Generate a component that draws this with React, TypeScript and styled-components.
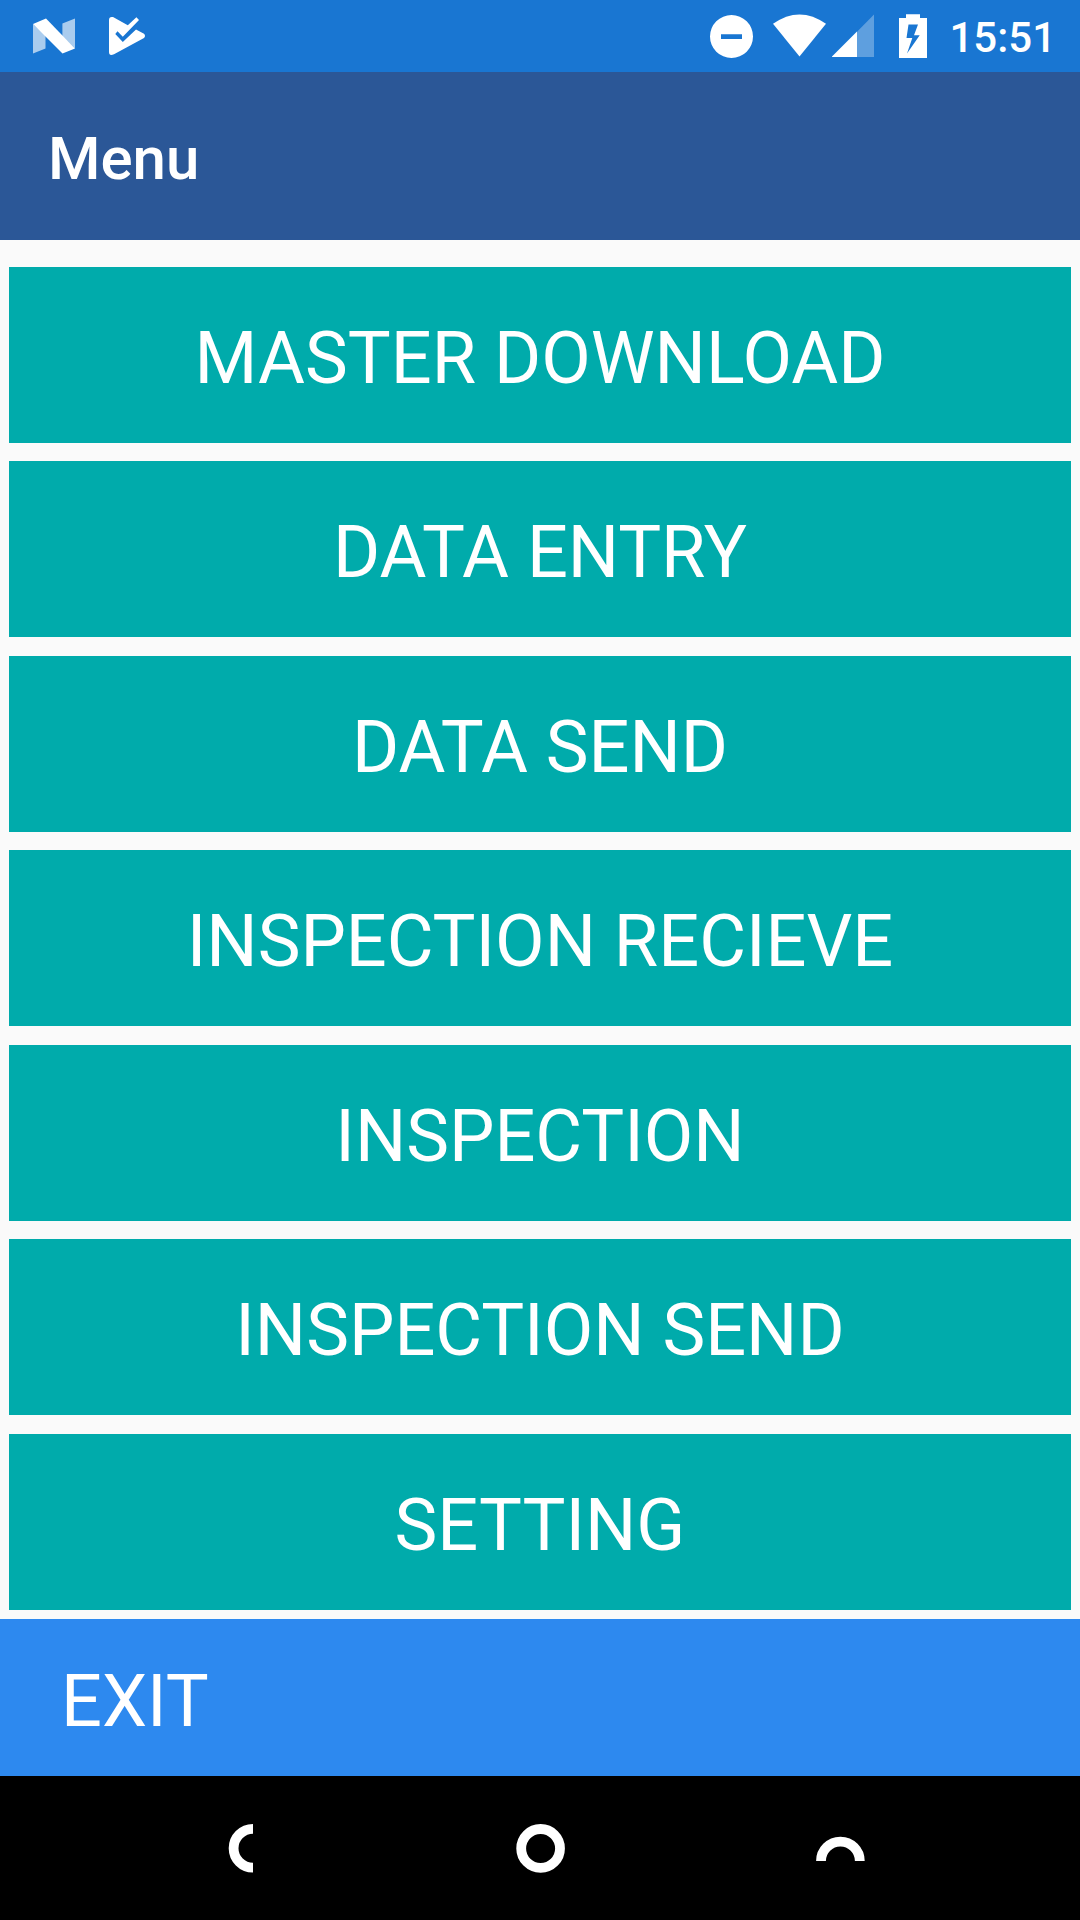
import React from "react";
import styled, { createGlobalStyle } from "styled-components";

const Global = createGlobalStyle`
  * { box-sizing: border-box; }
  body { margin: 0; background: #fafafa; font-family: Roboto, sans-serif; color: #fff; }
`;

const Screen = styled.div`
  width: 1080px;
  height: 1920px;
  display: flex;
  flex-direction: column;
  overflow: hidden;
  background: #fafafa;
`;

const StatusBar = styled.header`
  height: 72px;
  flex: none;
  display: flex;
  justify-content: space-between;
  padding: 0 24px 0 33px;
  background: #1976d2;
`;

const StatusGroup = styled.div`
  display: flex;
  align-items: center;
`;

const StatusIcon = styled.svg<{ $w: number; $gap: number }>`
  display: block;
  flex: none;
  width: ${(p) => p.$w}px;
  height: 72px;
  margin-right: ${(p) => p.$gap}px;
  fill: #fff;
`;

const Clock = styled.span`
  height: 72px;
  padding-top: 3px;
  font-size: 42px;
  font-weight: 500;
  line-height: 69px;
`;

const TitleBar = styled.h1`
  height: 168px;
  flex: none;
  margin: 0;
  padding: 5px 0 0 48px;
  display: flex;
  align-items: center;
  background: #2b5797;
  font-size: 60px;
  font-weight: 500;
`;

const List = styled.main`
  height: 1379px;
  flex: none;
  padding: 27px 9px 9px;
  display: flex;
  flex-direction: column;
`;

const ActionButton = styled.button`
  flex: none;
  border: 0;
  color: #fff;
  font: 400 72px/85px Roboto, sans-serif;
`;

const MenuButton = styled(ActionButton)`
  height: 176px;
  padding: 7px 0 0;
  margin-bottom: 18px;
  background: #00abab;

  &:nth-child(even) { margin-bottom: 19px; }
`;

const ExitButton = styled(ActionButton)`
  height: 157px;
  padding: 8px 0 0 61px;
  background: #2d89ef;
  text-align: left;
`;

const NavBar = styled.nav`
  height: 144px;
  flex: none;
  display: flex;
  justify-content: center;
  align-items: center;
  gap: 252px;
  background: #000;
`;

const NavIcon = styled.svg`
  display: block;
  width: 48px;
  height: 50px;
  fill: none;
  stroke: #fff;
  stroke-width: 9.8;
  overflow: visible;
`;

const items = [
  "MASTER DOWNLOAD",
  "DATA ENTRY",
  "DATA SEND",
  "INSPECTION RECIEVE",
  "INSPECTION",
  "INSPECTION SEND",
  "SETTING",
];

export default function App() {
  return (
    <>
      <Global />
      <Screen>
        <StatusBar>
          <StatusGroup>
            <StatusIcon $w={42} $gap={34} viewBox="33 0 42 72">
              <path opacity=".63" d="M33 24 45.5 35.5V48.6L33 53.5ZM62.4 23.6 75 18.5V48.5L62.4 36Z" />
              <path d="M33 24 46 18.5 75 48.5 62.5 53.5Z" />
            </StatusIcon>
            <StatusIcon $w={37} $gap={0} viewBox="109 0 37 72">
              <path d="M109 20Q109 17 111.8 17H113L127.8 25.3 136.4 17.3 139 20 122.8 36.7 117.5 31.3 115.3 33.9 122.8 42 136 29.5 144 33.8Q146 36 144 38L114 54.3Q109 56.5 109 52Z" />
            </StatusIcon>
          </StatusGroup>
          <StatusGroup>
            <StatusIcon $w={43} $gap={20} viewBox="710 0 43 72">
              <path fillRule="evenodd" d="M731.5 15a21.5 21.5 0 1 0 0 43a21.5 21.5 0 1 0 0-43ZM721 34.2H742V39H721Z" />
            </StatusIcon>
            <StatusIcon $w={53} $gap={6} viewBox="773 0 53 72">
              <path d="M773 23.8Q799.5 5 826 23.8L799.5 56.5Z" />
            </StatusIcon>
            <StatusIcon $w={42} $gap={25} viewBox="832 0 42 72">
              <path opacity=".3" d="M857 31.8 874 14.5V57H857Z" />
              <path d="M831.5 57 857 31.6V57Z" />
            </StatusIcon>
            <StatusIcon $w={28} $gap={22} viewBox="899 0 28 72">
              <path fillRule="evenodd" d="M906 14.2H920V18H927V58H899V18H906ZM908.5 24.5 906.5 38H912.3L907 53.5 919.7 35.3H914L918 24.5Z" />
            </StatusIcon>
            <Clock>15:51</Clock>
          </StatusGroup>
        </StatusBar>
        <TitleBar>Menu</TitleBar>
        <List>
          {items.map((label) => (
            <MenuButton key={label}>{label}</MenuButton>
          ))}
        </List>
        <ExitButton>EXIT</ExitButton>
        <NavBar>
          <NavIcon viewBox="0 0 48 50">
            <path d="M37 5.9A19.4 19.4 0 0 0 37 44.7" />
          </NavIcon>
          <NavIcon viewBox="0 0 48 50">
            <circle cx="24.6" cy="25.4" r="19.4" />
          </NavIcon>
          <NavIcon viewBox="0 0 48 50">
            <path d="M5 38A19.4 19.4 0 0 1 43.8 38" />
          </NavIcon>
        </NavBar>
      </Screen>
    </>
  );
}
